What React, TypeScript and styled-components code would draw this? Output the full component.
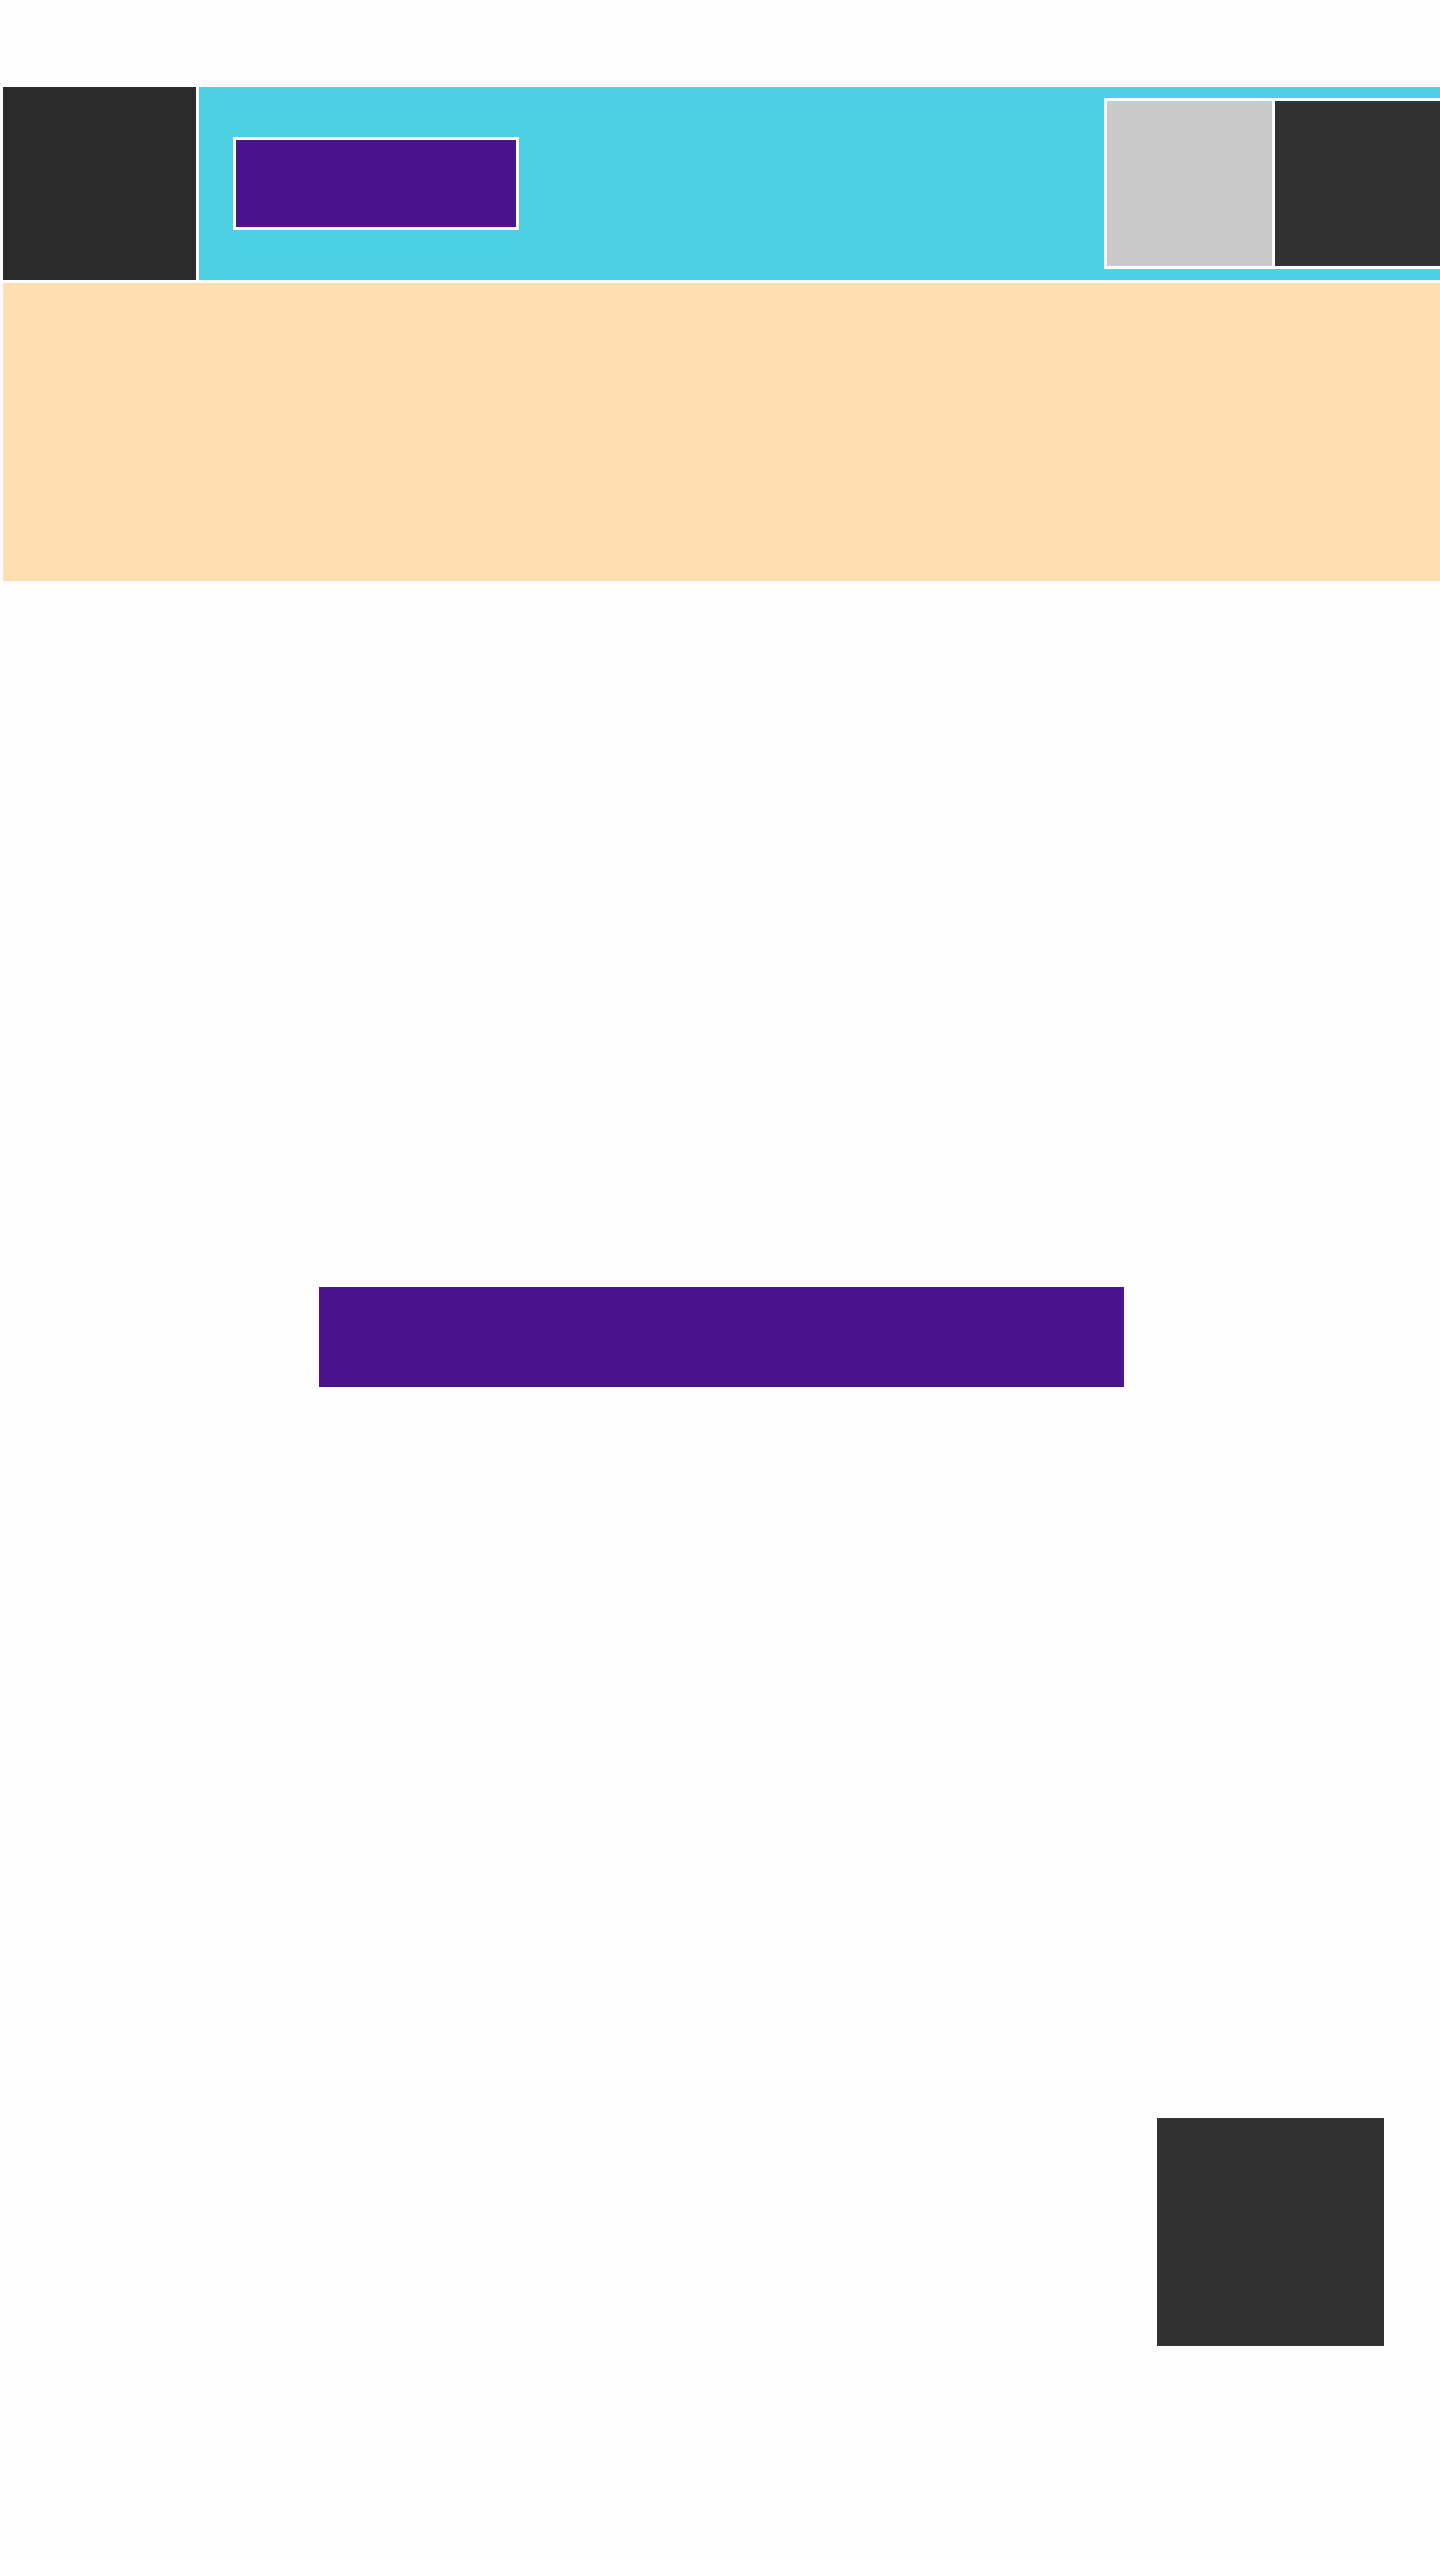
import React from "react";
import styled, { createGlobalStyle } from "styled-components";

const GlobalStyle = createGlobalStyle`
  html, body {
    margin: 0;
    padding: 0;
    background: #fdfdfd;
    overflow-x: hidden;
    font-family: "Liberation Sans", Arial, sans-serif;
  }
  #root {
    min-height: 2560px;
  }
`;

const Page = styled.div`
  width: 1440px;
  padding: 87px 0 0 3px;
  display: flex;
  flex-direction: column;
`;

const TopBar = styled.header`
  display: flex;
  gap: 3px;
  height: 193px;
  width: 1440px;
`;

const LogoTile = styled.div`
  flex: 0 0 193px;
  background: #2b2b2b;
`;

const NavBar = styled.nav`
  flex: 1;
  background: #4dd0e1;
  display: flex;
  align-items: center;
  justify-content: space-between;
  padding-left: 34px;
`;

const BrandBadge = styled.div`
  width: 280px;
  height: 87px;
  background: #4a148c;
  border: 3px solid #ffffff;
`;

const TileGroup = styled.div`
  display: flex;
  gap: 3px;
  padding: 3px;
  background: #ffffff;
`;

const Tile = styled.div<{ $tone: string }>`
  width: 165px;
  height: 165px;
  background: ${(p) => p.$tone};
`;

const Hero = styled.section`
  margin-top: 3px;
  width: 1440px;
  height: 298px;
  background: #ffdfb2;
`;

const CtaRow = styled.div`
  margin-top: 706px;
  padding-left: 316px;
`;

const CtaBar = styled.div`
  width: 805px;
  height: 100px;
  background: #4a148c;
`;

const FooterRow = styled.div`
  margin-top: 731px;
  padding-left: 1154px;
`;

const FooterBlock = styled.div`
  width: 227px;
  height: 228px;
  background: #323232;
`;

export default function App() {
  return (
    <>
      <GlobalStyle />
      <Page>
        <TopBar>
          <LogoTile />
          <NavBar>
            <BrandBadge />
            <TileGroup>
              <Tile $tone="#cacaca" />
              <Tile $tone="#323232" />
            </TileGroup>
          </NavBar>
        </TopBar>
        <Hero />
        <CtaRow>
          <CtaBar />
        </CtaRow>
        <FooterRow>
          <FooterBlock />
        </FooterRow>
      </Page>
    </>
  );
}
